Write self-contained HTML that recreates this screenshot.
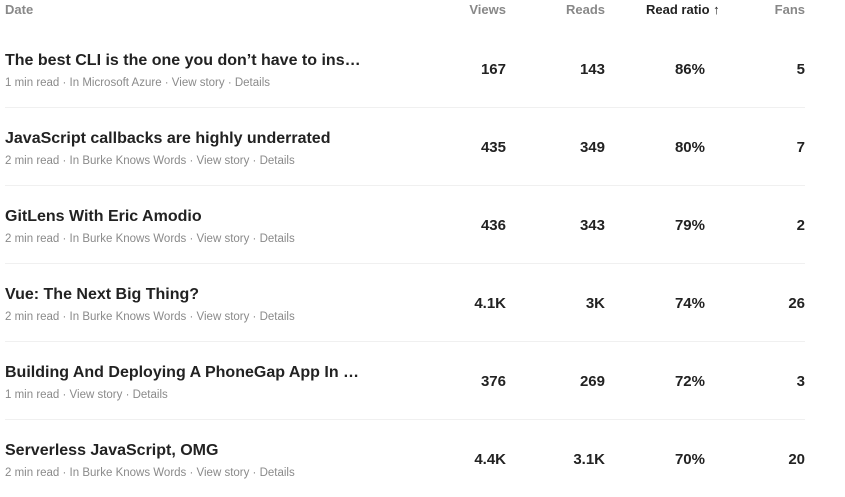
<!DOCTYPE html>
<html><head><style>
body{margin:0;background:#fff;font-family:"Liberation Sans",sans-serif;width:845px;height:495px;overflow:hidden;position:relative}
.h{position:absolute;top:2px;font-size:13px;color:#888;font-weight:bold}
.row{position:absolute;left:5px;width:800px;height:78px;border-bottom:1px solid #f0f0f0}
.t{position:absolute;left:0;top:-55px;font-size:16px;font-weight:bold;color:#222;white-space:nowrap}
.m{position:absolute;left:0;top:-30px;font-size:11.5px;color:#8a8a8a;white-space:nowrap}
.n{position:absolute;top:-47px;font-size:15px;font-weight:bold;color:#222;text-align:right;width:80px}
</style></head><body>
<div class="h" style="left:5px">Date</div>
<div class="h" style="left:426px;width:80px;text-align:right">Views</div>
<div class="h" style="left:525px;width:80px;text-align:right">Reads</div>
<div class="h" style="left:646px;color:#222">Read ratio ↑</div>
<div class="h" style="left:725px;width:80px;text-align:right">Fans</div>

<div class="row" style="top:29px;height:0;border:none"></div>
<div class="row" style="top:29px"><div class="t" style="top:23px">The best CLI is the one you don’t have to ins…</div><div class="m" style="top:48px">1 min read · In Microsoft Azure · View story · Details</div><div class="n" style="left:421px;top:32px">167</div><div class="n" style="left:520px;top:32px">143</div><div class="n" style="left:620px;top:32px">86%</div><div class="n" style="left:720px;top:32px">5</div></div>
<div class="row" style="top:107px"><div class="t" style="top:23px">JavaScript callbacks are highly underrated</div><div class="m" style="top:48px">2 min read · In Burke Knows Words · View story · Details</div><div class="n" style="left:421px;top:32px">435</div><div class="n" style="left:520px;top:32px">349</div><div class="n" style="left:620px;top:32px">80%</div><div class="n" style="left:720px;top:32px">7</div></div>
<div class="row" style="top:185px"><div class="t" style="top:23px">GitLens With Eric Amodio</div><div class="m" style="top:48px">2 min read · In Burke Knows Words · View story · Details</div><div class="n" style="left:421px;top:32px">436</div><div class="n" style="left:520px;top:32px">343</div><div class="n" style="left:620px;top:32px">79%</div><div class="n" style="left:720px;top:32px">2</div></div>
<div class="row" style="top:263px"><div class="t" style="top:23px">Vue: The Next Big Thing?</div><div class="m" style="top:48px">2 min read · In Burke Knows Words · View story · Details</div><div class="n" style="left:421px;top:32px">4.1K</div><div class="n" style="left:520px;top:32px">3K</div><div class="n" style="left:620px;top:32px">74%</div><div class="n" style="left:720px;top:32px">26</div></div>
<div class="row" style="top:341px"><div class="t" style="top:23px">Building And Deploying A PhoneGap App In …</div><div class="m" style="top:48px">1 min read · View story · Details</div><div class="n" style="left:421px;top:32px">376</div><div class="n" style="left:520px;top:32px">269</div><div class="n" style="left:620px;top:32px">72%</div><div class="n" style="left:720px;top:32px">3</div></div>
<div class="row" style="top:419px;border:none"><div class="t" style="top:23px">Serverless JavaScript, OMG</div><div class="m" style="top:48px">2 min read · In Burke Knows Words · View story · Details</div><div class="n" style="left:421px;top:32px">4.4K</div><div class="n" style="left:520px;top:32px">3.1K</div><div class="n" style="left:620px;top:32px">70%</div><div class="n" style="left:720px;top:32px">20</div></div>
</body></html>
